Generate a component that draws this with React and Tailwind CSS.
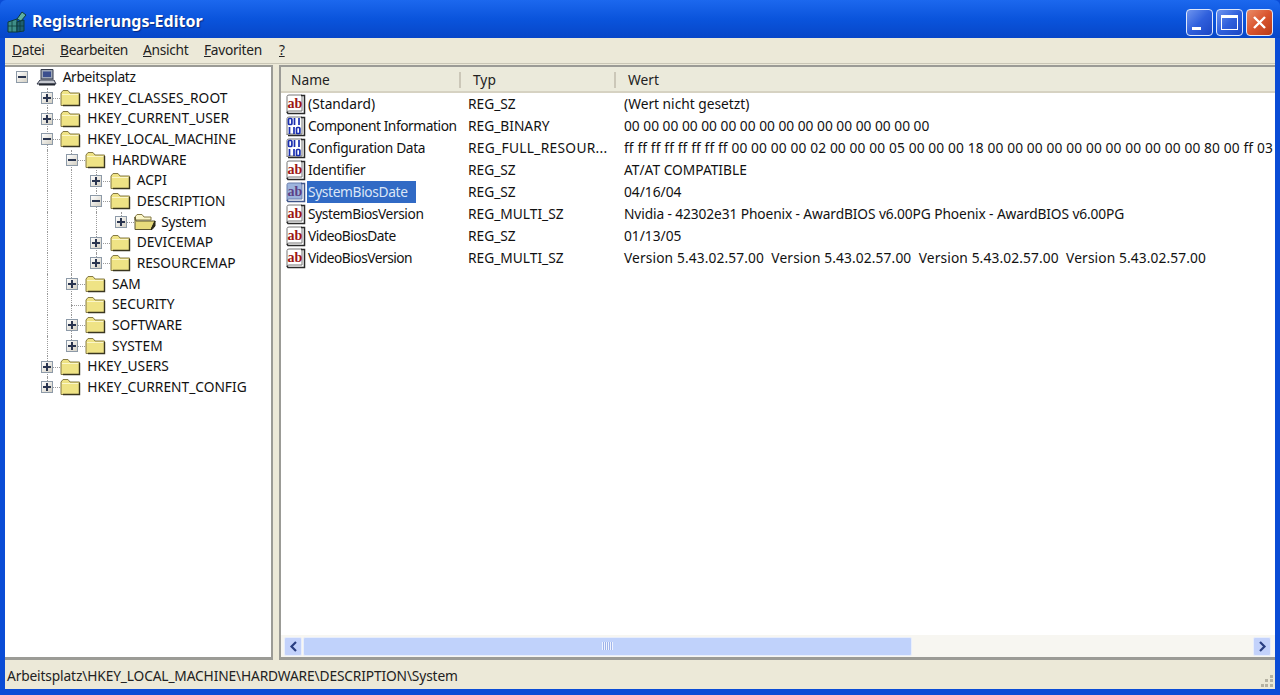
import React from "react";

const FONT = "font-['Noto_Sans','DejaVu_Sans',sans-serif]";

// guides: one entry per ancestor cell, true where a dotted line runs through it
const TREE = [
  { label: "Arbeitsplatz", exp: "minus", icon: "pc", guides: [], last: true, track: "tracking-[-0.33px]" },
  { label: "HKEY_CLASSES_ROOT", exp: "plus", guides: [false], track: "tracking-[0.1px]" },
  { label: "HKEY_CURRENT_USER", exp: "plus", guides: [false] },
  { label: "HKEY_LOCAL_MACHINE", exp: "minus", guides: [false], track: "tracking-[-0.15px]" },
  { label: "HARDWARE", exp: "minus", guides: [false, true] },
  { label: "ACPI", exp: "plus", guides: [false, true, true] },
  { label: "DESCRIPTION", exp: "minus", guides: [false, true, true] },
  { label: "System", exp: "plus", icon: "open", guides: [false, true, true, true], last: true, track: "tracking-[-0.3px]" },
  { label: "DEVICEMAP", exp: "plus", guides: [false, true, true] },
  { label: "RESOURCEMAP", exp: "plus", guides: [false, true, true], last: true },
  { label: "SAM", exp: "plus", guides: [false, true] },
  { label: "SECURITY", exp: null, guides: [false, true] },
  { label: "SOFTWARE", exp: "plus", guides: [false, true] },
  { label: "SYSTEM", exp: "plus", guides: [false, true], last: true },
  { label: "HKEY_USERS", exp: "plus", guides: [false] },
  { label: "HKEY_CURRENT_CONFIG", exp: "plus", guides: [false], last: true },
];

const VALUES = [
  { name: "(Standard)", icon: "ab", type: "REG_SZ", value: "(Wert nicht gesetzt)" },
  { name: "Component Information", nameTrack: "tracking-[-0.43px]", icon: "bin", type: "REG_BINARY", value: "00 00 00 00 00 00 00 00 00 00 00 00 00 00 00 00" },
  { name: "Configuration Data", nameTrack: "tracking-[-0.33px]", icon: "bin", type: "REG_FULL_RESOUR...", typeTrack: "tracking-[0.3px]", value: "ff ff ff ff ff ff ff ff 00 00 00 00 02 00 00 00 05 00 00 00 18 00 00 00 00 00 00 00 00 00 00 00 80 00 ff 03", valueTrack: "tracking-[0.13px]" },
  { name: "Identifier", nameTrack: "tracking-[-0.2px]", icon: "ab", type: "REG_SZ", value: "AT/AT COMPATIBLE" },
  { name: "SystemBiosDate", nameTrack: "tracking-[-0.36px]", icon: "ab", type: "REG_SZ", value: "04/16/04", selected: true },
  { name: "SystemBiosVersion", nameTrack: "tracking-[-0.41px]", icon: "ab", type: "REG_MULTI_SZ", value: "Nvidia - 42302e31 Phoenix - AwardBIOS v6.00PG Phoenix - AwardBIOS v6.00PG", valueTrack: "tracking-[-0.11px]" },
  { name: "VideoBiosDate", nameTrack: "tracking-[-0.5px]", icon: "ab", type: "REG_SZ", value: "01/13/05" },
  { name: "VideoBiosVersion", nameTrack: "tracking-[-0.5px]", icon: "ab", type: "REG_MULTI_SZ", value: "Version 5.43.02.57.00  Version 5.43.02.57.00  Version 5.43.02.57.00  Version 5.43.02.57.00", valueTrack: "tracking-[0.12px]" },
];

function FolderIcon() {
  return (
    <svg width="21" height="18" viewBox="0 0 21 18">
      <path d="M1 4 L3 1.5 H8 L10 4 H19.5 V16.5 H1 Z" fill="#efe385" stroke="#857a45" strokeWidth="1" />
      <path d="M2 5 H18.5 V6 H2 Z" fill="#fbf6c8" />
      <path d="M19.5 5 V16.5 H3" fill="none" stroke="#3a3620" strokeWidth="1.4" />
    </svg>
  );
}

function OpenFolderIcon() {
  return (
    <svg width="22" height="18" viewBox="0 0 22 18">
      <path d="M1 4 L3 1.5 H8 L10 4 H17 V7 H1 Z" fill="#fbf6c8" stroke="#857a45" />
      <path d="M1 16.5 V4 L2 8 H21 L17 16.5 Z" fill="#e9dc7c" stroke="#5d5630" strokeWidth="1" />
      <path d="M17 16.5 L21 8 V13 L18 16.5 Z" fill="#2d2a18" stroke="#2d2a18" />
    </svg>
  );
}

function PcIcon() {
  return (
    <svg width="21" height="19" viewBox="0 0 21 19">
      <path d="M5 1.5 H17 V11 H5 Z" fill="#9da7b8" stroke="#33394a" />
      <rect x="7" y="3.5" width="8" height="5.5" fill="#3b4f8e" />
      <path d="M4 12 H18 L20 16 H1 Z" fill="#c5c8cf" stroke="#33394a" />
      <path d="M3 16.5 H19" stroke="#22262f" strokeWidth="2" />
    </svg>
  );
}

function AbIcon({ selected }) {
  return (
    <svg width="21" height="21" viewBox="0 0 21 21">
      <path d="M2 2.5 Q2 1 4 1 H17 V17 H4 Q2 17 2 18.5 Z" fill={selected ? "#9db4dd" : "#fff"} stroke={selected ? "#6b7fae" : "#777"} />
      <path d="M16 1.5 H19.5 V19.5 H3 L2 18" fill="none" stroke={selected ? "#3e5488" : "#2a2a2a"} strokeWidth="1.5" />
      <text x="2.4" y="13.5" fontSize="14" fontWeight="700" fontFamily="'Liberation Serif', serif" fill={selected ? "#5c3f86" : "#9c1414"}>ab</text>
    </svg>
  );
}

function BinIcon() {
  return (
    <svg width="21" height="21" viewBox="0 0 21 21">
      <path d="M2 2.5 Q2 1 4 1 H17 V18 H4 Q2 18 2 19 Z" fill="#fff" stroke="#777" />
      <path d="M16 1.5 H19.5 V19.5 H3" fill="none" stroke="#2a2a2a" strokeWidth="1.5" />
      <g fill="none" stroke="#1a2fb0" strokeWidth="1.7">
        <rect x="3.5" y="2.5" width="3.4" height="6" rx="1" />
        <path d="M9.5 2 V9 M14 2 V9" />
        <path d="M4.5 11 V18 M9 11 V18" />
        <rect x="11.5" y="11.5" width="3.4" height="6" rx="1" />
      </g>
    </svg>
  );
}

function Expander({ kind }) {
  return (
    <span className="relative z-10 flex h-[12px] w-[12px] items-center justify-center border border-[#8d9aa8] bg-gradient-to-br from-white to-[#d4d0c4]">
      <span className="absolute h-[2px] w-[8px] bg-[#2a3550]" />
      {kind === "plus" && <span className="absolute h-[8px] w-[2px] bg-[#2a3550]" />}
    </span>
  );
}

function TreeRow({ item }) {
  const depth = item.guides.length;
  return (
    <div className="flex h-[20.67px] items-center">
      {item.guides.map((on, i) => (
        <span key={i} className="relative h-full w-[24.67px] shrink-0">
          {on && <span className="absolute left-[12px] top-0 h-full w-0 border-l border-dotted border-[#9a9a9a]" />}
        </span>
      ))}
      <span className="relative flex h-full w-[24.67px] shrink-0 items-center justify-center">
        {depth > 0 && (
          <>
            <span className={`absolute left-[12px] top-0 w-0 border-l border-dotted border-[#9a9a9a] ${item.last ? "h-1/2" : "h-full"}`} />
            <span className="absolute left-[12px] right-[-1px] top-1/2 border-t border-dotted border-[#9a9a9a]" />
          </>
        )}
        {item.exp && <Expander kind={item.exp} />}
      </span>
      <span className="flex w-[28px] shrink-0 items-center pl-[1px]">
        {item.icon === "pc" ? <PcIcon /> : item.icon === "open" ? <OpenFolderIcon /> : <FolderIcon />}
      </span>
      <span className={`whitespace-nowrap text-[#111] ${item.track || ""}`}>{item.label}</span>
    </div>
  );
}

function WinButton({ children, close }) {
  return (
    <div
      className={`flex h-[27px] w-[27px] items-center justify-center rounded-[4px] border border-[#dfe8fb] ${
        close
          ? "bg-gradient-to-br from-[#e98a66] via-[#d9542e] to-[#b93a16]"
          : "bg-gradient-to-br from-[#6f94ee] via-[#2f5fdc] to-[#1c46c4]"
      }`}
    >
      {children}
    </div>
  );
}

function ScrollButton({ dir }) {
  return (
    <div className="flex h-[19px] w-[18px] shrink-0 items-center justify-center rounded-[2px] border border-[#e8eefc] bg-[#c3d2fb]">
      <svg width="9" height="11" viewBox="0 0 9 11">
        <path d={dir === "left" ? "M7 1 L2.5 5.5 L7 10" : "M2 1 L6.5 5.5 L2 10"} fill="none" stroke="#2a3f82" strokeWidth="2.2" />
      </svg>
    </div>
  );
}

export default function App() {
  return (
    <div className={`${FONT} flex h-[695px] w-[1280px] flex-col overflow-hidden bg-[#0a4cd6] text-[13.75px] leading-[1.2]`}>
      {/* Title bar */}
      <div className="flex h-[38px] shrink-0 items-center rounded-t-[6px] bg-gradient-to-b from-[#1c68ee] via-[#0a54dc] to-[#0746c8] pl-[7px] pr-[7px] pt-[6px]">
        <svg width="21" height="23" viewBox="0 0 21 23" className="shrink-0">
          <path d="M1 11 L10 8 V21 L1 21 Z" fill="#3f8f88" stroke="#0d3a3a" />
          <path d="M10 11 L17 9 V20 L10 21 Z" fill="#1f5f70" stroke="#0d3a3a" />
          <path d="M1 15 H17 M5 10 V21 M13 10 V21" stroke="#0d3a3a" strokeWidth="0.8" />
          <path d="M10 8 L15 1 L19 4 L14 10 Z" fill="#5fb0a0" stroke="#0d3a3a" />
        </svg>
        <span className="ml-[4px] text-[16px] font-bold text-white [text-shadow:1px_1px_1px_#0a2a80]">Registrierungs-Editor</span>
        <div className="ml-auto flex gap-[3px]">
          <WinButton>
            <span className="mt-[12px] mr-[7px] h-[3px] w-[9px] bg-white" />
          </WinButton>
          <WinButton>
            <span className="h-[15px] w-[17px] border border-t-[3px] border-white" />
          </WinButton>
          <WinButton close>
            <svg width="15" height="15" viewBox="0 0 15 15">
              <path d="M2 2 L13 13 M13 2 L2 13" stroke="#fff" strokeWidth="2.4" />
            </svg>
          </WinButton>
        </div>
      </div>

      {/* Client area */}
      <div className="mx-[5px] mb-[6px] flex min-h-0 flex-1 flex-col bg-[#ece9d8]">
        <div className="flex h-[26px] shrink-0 items-center border-b border-[#c9c6b6] pl-[7px] tracking-[-0.3px] text-[#222]">
          <span className="w-[48px]"><u>D</u>atei</span>
          <span className="w-[83px]"><u>B</u>earbeiten</span>
          <span className="w-[61px]"><u>A</u>nsicht</span>
          <span className="w-[75px]"><u>F</u>avoriten</span>
          <span><u>?</u></span>
        </div>

        <div className="flex min-h-0 flex-1 gap-[6px] pt-[1px]">
          {/* Tree */}
          <div className="w-[268px] shrink-0 overflow-hidden border-b-[3px] border-r-2 border-t-2 border-[#9b9b96] bg-white pl-[5px]">
            {TREE.map((item) => (
              <TreeRow key={item.label} item={item} />
            ))}
          </div>

          {/* List */}
          <div className="flex min-w-0 flex-1 flex-col border-b-[3px] border-l-2 border-t-2 border-[#9b9b96] bg-white">
            <div className="flex h-[26px] shrink-0 items-center border-b-2 border-[#d6d2c2] bg-[#ebeadb] pt-[2px] text-[#222]">
              <span className="flex h-full w-[180px] shrink-0 items-center pl-[10px]">
                <span>Name</span>
                <span className="ml-auto h-[16px] border-l-2 border-[#cbc7b8]" />
              </span>
              <span className="flex h-full w-[155px] shrink-0 items-center pl-[12px]">
                <span>Typ</span>
                <span className="ml-auto h-[16px] border-l-2 border-[#cbc7b8]" />
              </span>
              <span className="pl-[12px]">Wert</span>
            </div>
            <div className="min-h-0 flex-1">
              {VALUES.map((row) => (
                <div key={row.name} className="flex h-[22px] items-center whitespace-nowrap text-[#111]">
                  <span className="flex w-[187px] shrink-0 items-center pl-[4px]">
                    <span className="w-[21px] shrink-0">
                      {row.icon === "ab" ? <AbIcon selected={row.selected} /> : <BinIcon />}
                    </span>
                    <span className={`ml-[1px] flex h-[22px] items-center pl-[1px] pr-[8px] ${row.nameTrack || ""} ${row.selected ? "bg-[#316ac5] text-[#dbe6f7]" : ""}`}>
                      {row.name}
                    </span>
                  </span>
                  <span className={`w-[156px] shrink-0 ${row.typeTrack || ""}`}>{row.type}</span>
                  <span className={`whitespace-pre ${row.valueTrack || ""}`}>{row.value}</span>
                </div>
              ))}
            </div>
            {/* Horizontal scrollbar */}
            <div className="flex h-[22px] shrink-0 items-center gap-[1px] bg-[#f7f6f1] pl-[3px] pr-[4px]">
              <ScrollButton dir="left" />
              <div className="flex h-[19px] w-[609px] shrink-0 items-center justify-center rounded-[2px] border border-[#e8eefc] bg-[#c0d2fb]">
                <span className="h-[8px] w-[11px] bg-[repeating-linear-gradient(90deg,#eef3ff_0,#eef3ff_1px,#9fb4ea_1px,#9fb4ea_2px)]" />
              </div>
              <div className="flex-1" />
              <ScrollButton dir="right" />
            </div>
          </div>
        </div>

        {/* Status bar */}
        <div className="relative flex h-[29px] shrink-0 items-center pl-[2px] pt-[3px] tracking-[-0.14px] text-[#222]">
          Arbeitsplatz\HKEY_LOCAL_MACHINE\HARDWARE\DESCRIPTION\System
          <svg width="14" height="14" viewBox="0 0 14 14" className="absolute bottom-[1px] right-[1px]">
            <g fill="#b5b2a2">
              <rect x="10" y="1" width="3" height="3" />
              <rect x="5" y="5" width="3" height="3" />
              <rect x="10" y="5" width="3" height="3" />
              <rect x="1" y="10" width="3" height="3" />
              <rect x="5" y="10" width="3" height="3" />
              <rect x="10" y="10" width="3" height="3" />
            </g>
          </svg>
        </div>
      </div>
    </div>
  );
}
